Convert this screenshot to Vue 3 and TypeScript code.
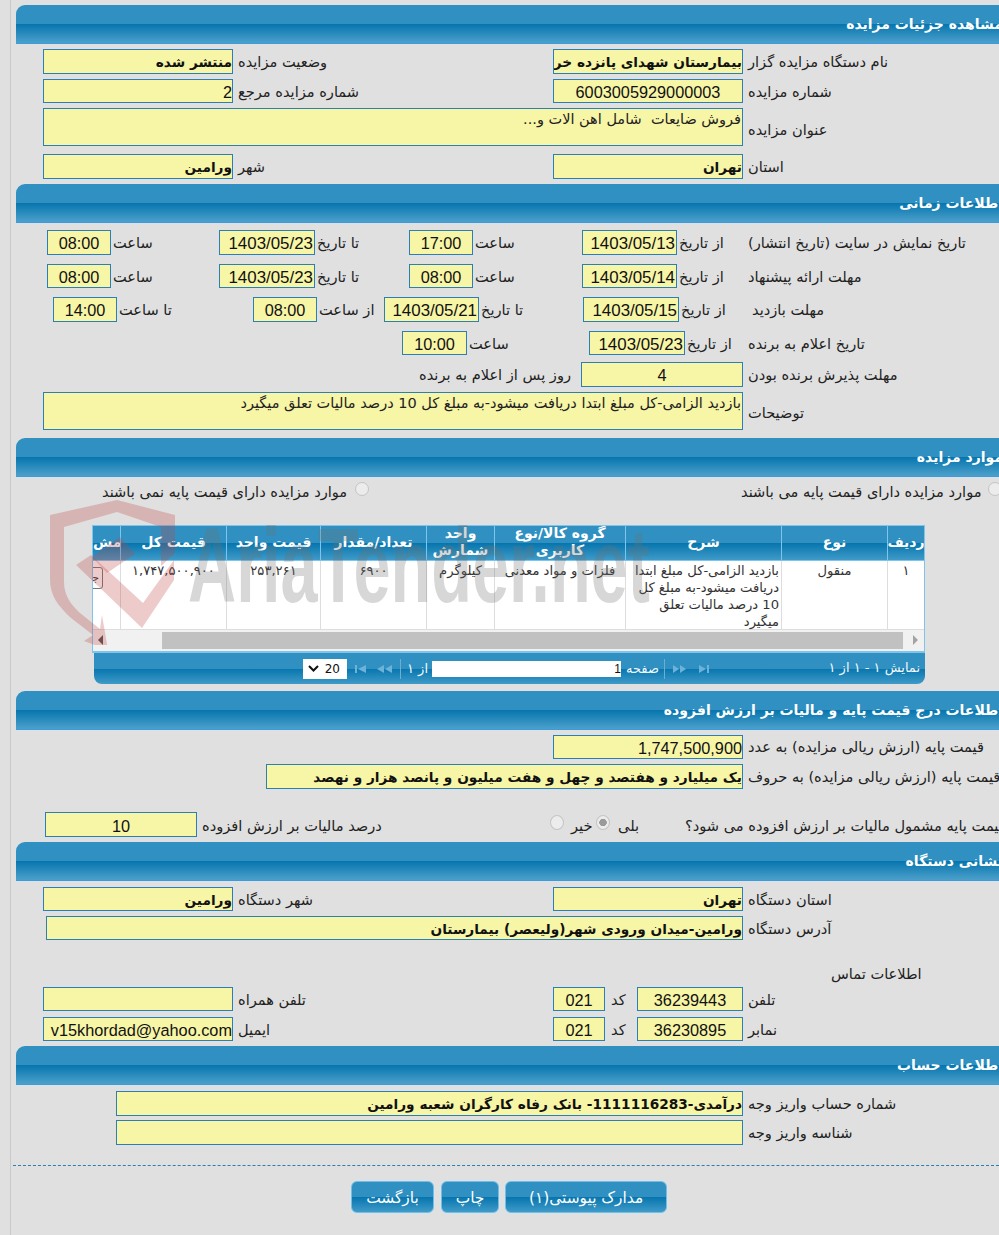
<script setup lang="ts">
interface Col { title: string; value: string; cls: string }
const cols: Col[] = [
  { title: 'مش', value: '', cls: 'c-more' },
  { title: 'قیمت کل', value: '۱,۷۴۷,۵۰۰,۹۰۰', cls: 'c-total' },
  { title: 'قیمت واحد', value: '۲۵۳,۲۶۱', cls: 'c-unit' },
  { title: 'تعداد/مقدار', value: '۶۹۰۰', cls: 'c-qty' },
  { title: 'واحد شمارش', value: 'کیلوگرم', cls: 'c-count' },
  { title: 'گروه کالا/نوع کاربری', value: 'فلزات و مواد معدنی', cls: 'c-group' },
  { title: 'شرح', value: 'بازدید الزامی-کل مبلغ ابتدا دریافت میشود-به مبلغ کل 10 درصد مالیات تعلق میگیرد', cls: 'c-desc' },
  { title: 'نوع', value: 'منقول', cls: 'c-type' },
  { title: 'ردیف', value: '۱', cls: 'c-idx' },
]
</script>

<template>
  <div class="page">
    <section class="panel">
      <h2 class="bar">مشاهده جزئیات مزایده</h2>
      <div class="row top5">
        <div class="cell w510"><span class="fld w190 b rtl">منتشر شده</span><span class="lab">وضعیت مزایده</span></div>
        <div class="cell"><span class="fld w190 b rtl">بیمارستان شهدای پانزده خرداد</span><span class="lab">نام دستگاه مزایده گزار</span></div>
      </div>
      <div class="row top5">
        <div class="cell w510"><span class="fld w190 h24 num">2</span><span class="lab">شماره مزایده مرجع</span></div>
        <div class="cell"><span class="fld w190 h24 num ctr">6003005929000003</span><span class="lab">شماره مزایده</span></div>
      </div>
      <div class="row top5">
        <div class="cell"><span class="area w700">فروش ضایعات&nbsp; شامل اهن الات و...</span><span class="lab dn3">عنوان مزایده</span></div>
      </div>
      <div class="row top8">
        <div class="cell w510"><span class="fld w190 b rtl">ورامین</span><span class="lab">شهر</span></div>
        <div class="cell"><span class="fld w190 b rtl">تهران</span><span class="lab">استان</span></div>
      </div>
    </section>

    <section class="panel top5">
      <h2 class="bar">اطلاعات زمانی</h2>
      <div class="row top7 pl4">
        <div class="cell w172 g2"><span class="fld w64 num ctr">08:00</span><span class="lab">ساعت</span></div>
        <div class="cell w190 g2"><span class="fld w96 num date">1403/05/23</span><span class="lab">تا تاریخ</span></div>
        <div class="cell w173 g2"><span class="fld w64 num ctr">17:00</span><span class="lab">ساعت</span></div>
        <div class="cell w166 g2"><span class="fld w95 num date">1403/05/13</span><span class="lab">از تاریخ</span></div>
        <span class="lab">تاریخ نمایش در سایت (تاریخ انتشار)</span>
      </div>
      <div class="row top9 pl4">
        <div class="cell w172 g2"><span class="fld w64 h24 num ctr">08:00</span><span class="lab">ساعت</span></div>
        <div class="cell w190 g2"><span class="fld w96 h24 num date">1403/05/23</span><span class="lab">تا تاریخ</span></div>
        <div class="cell w173 g2"><span class="fld w64 h24 num ctr">08:00</span><span class="lab">ساعت</span></div>
        <div class="cell w166 g2"><span class="fld w95 h24 num date">1403/05/14</span><span class="lab">از تاریخ</span></div>
        <span class="lab">مهلت ارائه پیشنهاد</span>
      </div>
      <div class="row top9 pl10">
        <div class="cell w200 g2"><span class="fld w64 num ctr">14:00</span><span class="lab">تا ساعت</span></div>
        <div class="cell w131 g2"><span class="fld w64 num ctr">08:00</span><span class="lab">از ساعت</span></div>
        <div class="cell w199 g2"><span class="fld w95 num date">1403/05/21</span><span class="lab">تا تاریخ</span></div>
        <div class="cell w169 g2"><span class="fld w96 num date">1403/05/15</span><span class="lab">از تاریخ</span></div>
        <span class="lab">مهلت بازدید</span>
      </div>
      <div class="row top9 pl359">
        <div class="cell w187 g2"><span class="fld w65 h24 num ctr">10:00</span><span class="lab">ساعت</span></div>
        <div class="cell w159 g2"><span class="fld w96 h24 num date">1403/05/23</span><span class="lab">از تاریخ</span></div>
        <span class="lab">تاریخ اعلام به برنده</span>
      </div>
      <div class="row top7 pl380">
        <span class="lab w158 end">روز پس از اعلام به برنده</span>
        <span class="fld w162 num ctr ml10">4</span>
        <span class="lab ml5">مهلت پذیرش برنده بودن</span>
      </div>
      <div class="row top5">
        <div class="cell"><span class="area w700">بازدید الزامی-کل مبلغ ابتدا دریافت میشود-به مبلغ کل 10 درصد مالیات تعلق میگیرد</span><span class="lab dn2">توضیحات</span></div>
      </div>
    </section>

    <section class="panel top8">
      <h2 class="bar">موارد مزایده</h2>
      <div class="radios">
        <div class="radio-item left"><span class="lab w249">موارد مزایده دارای قیمت پایه نمی باشند</span><i class="radio"></i></div>
        <div class="radio-item right"><span class="lab w244">موارد مزایده دارای قیمت پایه می باشند</span><i class="radio"></i></div>
      </div>
      <div class="grid">
        <div class="thead">
          <div v-for="c in cols" :key="c.cls" class="th" :class="c.cls">{{ c.title }}</div>
        </div>
        <div class="tbody">
          <div v-for="c in cols" :key="c.cls" class="td" :class="c.cls">
            <span v-if="c.cls === 'c-more'" class="more">جزئیات</span>
            <template v-else>{{ c.value }}</template>
          </div>
        </div>
        <div class="hscroll">
          <span class="arrow a-left"></span>
          <span class="thumb"></span>
          <span class="arrow a-right"></span>
        </div>
      </div>
      <div class="pager">
        <span class="select"><svg width="11" height="7" viewBox="0 0 11 7"><path d="M1 1l4.500 4.500L10 1" fill="none" stroke="#111" stroke-width="2"/></svg><b>20</b></span>
        <svg class="nav" width="37" height="8" viewBox="0 0 37 8"><path d="M0 0h2v8H0zM11 0v8L3 4zM29 0v8l-7-4zM37 0v8l-7-4z" fill="#6db2d8"/></svg>
        <span class="sep"></span>
        <span class="ptext of">از ۱</span>
        <span class="pinput">1</span>
        <span class="ptext pg">صفحه</span>
        <span class="sep sep2"></span>
        <svg class="nav" width="38" height="8" viewBox="0 0 38 8"><path d="M0 0v8l6-4zM7 0v8l6-4zM26 0v8l7-4zM34 0h2v8h-2z" fill="#6db2d8"/></svg>
        <span class="ptext show">نمایش ۱ - ۱ از ۱</span>
      </div>
    </section>

    <section class="panel top7">
      <h2 class="bar">اطلاعات درج قیمت پایه و مالیات بر ارزش افزوده</h2>
      <div class="row top5 pl510">
        <span class="fld w190 h24 num">1,747,500,900</span><span class="lab ml5">قیمت پایه (ارزش ریالی مزایده) به عدد</span>
      </div>
      <div class="row top5 pl223">
        <span class="fld w477 b rtl">یک میلیارد و هفتصد و چهل و هفت میلیون و پانصد هزار و نهصد</span><span class="lab ml5">قیمت پایه (ارزش ریالی مزایده) به حروف</span>
      </div>
      <div class="row top23 pl2">
        <span class="fld w152 num ctr tall">10</span><span class="lab ml5 w348">درصد مالیات بر ارزش افزوده</span>
        <i class="radio r2"></i><span class="lab ml7 w25">خیر</span><i class="radio r2 on"></i><span class="lab ml8 w67">بلی</span>
        <span class="lab">قیمت پایه مشمول مالیات بر ارزش افزوده می شود؟</span>
      </div>
    </section>

    <section class="panel top5">
      <h2 class="bar">نشانی دستگاه</h2>
      <div class="row top6">
        <div class="cell w510"><span class="fld w190 h24 b rtl">ورامین</span><span class="lab">شهر دستگاه</span></div>
        <div class="cell"><span class="fld w190 h24 b rtl">تهران</span><span class="lab">استان دستگاه</span></div>
      </div>
      <div class="row top5 pl3">
        <span class="fld w697 h24 b rtl">ورامین-میدان ورودی شهر(ولیعصر) بیمارستان</span><span class="lab ml5">آدرس دستگاه</span>
      </div>
      <div class="contact">اطلاعات تماس</div>
      <div class="row top1">
        <div class="cell w510"><span class="fld w190 h24"></span><span class="lab">تلفن همراه</span></div>
        <div class="cell g6"><span class="fld w52 h24 num ctr">021</span><span class="lab w20">کد</span><span class="fld w106 h24 num ctr">36239443</span><span class="lab ml-1">تلفن</span></div>
      </div>
      <div class="row top6">
        <div class="cell w510"><span class="fld w190 h24 num">v15khordad@yahoo.com</span><span class="lab">ایمیل</span></div>
        <div class="cell g6"><span class="fld w52 h24 num ctr">021</span><span class="lab w20">کد</span><span class="fld w106 h24 num ctr">36230895</span><span class="lab ml-1">نمابر</span></div>
      </div>
    </section>

    <section class="panel top5">
      <h2 class="bar">اطلاعات حساب</h2>
      <div class="row top6 pl73">
        <span class="fld w627 b rtl">درآمدی-1111116283- بانک رفاه کارگران شعبه ورامین</span><span class="lab ml5">شماره حساب واریز وجه</span>
      </div>
      <div class="row top4 pl73">
        <span class="fld w627"></span><span class="lab ml5">شناسه واریز وجه</span>
      </div>
    </section>

    <div class="dash"></div>
    <div class="actions">
      <button class="btn wb1">بازگشت</button>
      <button class="btn wb2">چاپ</button>
      <button class="btn wb3">مدارک پیوستی(۱)</button>
    </div>

    <div class="mark" aria-hidden="true">
      <span class="wm-text">AriaTender.net</span>
      <svg class="shield" width="130" height="145" viewBox="0 0 130 145">
        <path d="M0 15L67 0l58 15v38l-14 13V27L67 12 14 27v55c0 12 6 22 16 31l20 16 2-14 6 35-24-9 9-6-22-17C8 106 0 95 0 80z" fill="#be4646" fill-opacity=".28"/>
        <path d="M26 65l15-10 52 48 31-43v20l-32 48z" fill="#be4646" fill-opacity=".28"/>
        <path d="M42 57l28-20 15 17-28 19z" fill="#be4646" fill-opacity=".28"/>
      </svg>
    </div>
  </div>
</template>

<style>
html, body { margin: 0; background: #e0e0e0; overflow: hidden; }
</style>

<style scoped>
.page {
  position: relative;
  width: 999px;
  height: 1235px;
  overflow: hidden;
  box-sizing: border-box;
  padding: 5px 0 0 16px;
  background: #e0e0e0;
  color: #111;
  font-family: "Liberation Sans", "DejaVu Sans", sans-serif;
  font-size: 14px;
}
.page::before {
  content: "";
  position: absolute;
  left: 10px;
  top: 0;
  bottom: 0;
  width: 1px;
  background: #c9c9c9;
}
.panel { width: 1000px; }
.bar {
  box-sizing: border-box;
  height: 39px;
  margin: 0;
  padding: 8px 13px 0 0;
  border-radius: 9px 0 0 0;
  border-bottom: 1px solid #3b9be0;
  background: linear-gradient(#2f90c1 0, #2f90c1 50%, #0776ae 51%, #4ca0cb 100%);
  color: #fff;
  font: bold 14px/22px "DejaVu Sans", sans-serif;
  direction: rtl;
  text-align: right;
  white-space: nowrap;
}
.row { display: flex; align-items: center; padding-left: 27px; min-height: 24px; }
.cell { display: flex; align-items: center; gap: 5px; flex: none; }
.lab {
  flex: none;
  position: relative;
  font-family: "DejaVu Sans", sans-serif;
  font-size: 14.600px;
  line-height: 18px;
  direction: rtl;
  text-align: left;
  white-space: nowrap;
  color: #222;
}
.row:has(.h24):not(.pl510) .lab, .pl2 .lab { top: 1px; }
.fld {
  flex: none;
  display: block;
  box-sizing: border-box;
  height: 25px;
  border: 1px solid #2b7fb3;
  background: #f7f5a6;
  padding: 0;
  overflow: hidden;
  white-space: nowrap;
  text-align: right;
  font-family: "Liberation Sans", "DejaVu Sans", sans-serif;
  font-size: 16.300px;
  line-height: 24px;
  color: #111;
}
.area {
  display: block;
  box-sizing: border-box;
  height: 38px;
  border: 1px solid #2b7fb3;
  background: #f7f5a6;
  padding: 1px 1px 0;
  direction: rtl;
  font-family: "DejaVu Sans", "Liberation Sans", sans-serif;
  font-size: 14.500px;
  line-height: 19px;
  color: #222;
}
.b { font-weight: bold; font-family: "DejaVu Sans", sans-serif; font-size: 13.700px; line-height: 25px; }
.rtl { direction: rtl; }
.num { font-weight: normal; }
.ctr { text-align: center; }
.h24 { height: 24px; line-height: 24px; }
.date { text-align: right; padding-right: 1px; font-size: 16.900px; line-height: 25px; }
.tall { line-height: 26px; }
.end { text-align: right; }
.dn3 { top: 3px; }
.dn2 { top: 2px; }

.top1 { margin-top: 1px; } .top4 { margin-top: 4px; } .top5 { margin-top: 5px; }
.top6 { margin-top: 6px; } .top7 { margin-top: 7px; } .top8 { margin-top: 8px; }
.top9 { margin-top: 9px; } .top23 { margin-top: 23px; }
.pl2 { padding-left: 29px; } .pl3 { padding-left: 30px; } .pl4 { padding-left: 31px; }
.pl10 { padding-left: 37px; } .pl73 { padding-left: 100px; } .pl223 { padding-left: 250px; }
.pl359 { padding-left: 386px; } .pl380 { padding-left: 407px; } .pl510 { padding-left: 537px; }
.ml5 { margin-left: 5px; } .ml7 { margin-left: 7px; } .ml8 { margin-left: 8px; } .ml10 { margin-left: 10px; }
.ml-1 { margin-left: -1px; }
.g2 { gap: 2px; } .g6 { gap: 6px; }

.w20 { width: 20px; } .w25 { width: 25px; } .w52 { width: 52px; } .w64 { width: 64px; } .w65 { width: 65px; }
.w67 { width: 67px; } .w95 { width: 95px; } .w96 { width: 96px; } .w106 { width: 106px; } .w131 { width: 131px; }
.w152 { width: 152px; } .w158 { width: 148px; } .w159 { width: 159px; } .w162 { width: 162px; } .w166 { width: 166px; }
.w169 { width: 169px; } .w172 { width: 172px; } .w173 { width: 173px; } .w187 { width: 187px; } .w190 { width: 190px; }
.w199 { width: 199px; } .w200 { width: 200px; } .w244 { width: 244px; } .w249 { width: 249px; } .w348 { width: 348px; }
.w477 { width: 477px; } .w510 { width: 510px; }
.w627 { width: 627px; } .w697 { width: 697px; } .w700 { width: 700px; }

.radios { position: relative; height: 48px; }
.radio-item { position: absolute; top: 6px; display: flex; align-items: flex-start; }
.radio-item.left { left: 86px; gap: 4px; }
.radio-item.right { left: 725px; gap: 3px; }
.radio {
  flex: none;
  display: block;
  box-sizing: border-box;
  width: 14px;
  height: 14px;
  margin-top: -1px;
  border: 1px solid #c4c4c4;
  border-radius: 50%;
  background: #ececec;
}
.radio.r2 { height: 15px; margin-top: -4px; }
.radio.on { background: radial-gradient(circle, #9a9a9a 0 3.500px, #ececec 4px); }

.grid {
  box-sizing: border-box;
  width: 833px;
  margin-left: 76px;
  border: 1px solid #7fc4ea;
  border-bottom-width: 2px;
  background: #fff;
  overflow: hidden;
}
.thead, .tbody { display: flex; }
.th {
  box-sizing: border-box;
  height: 35px;
  display: flex;
  align-items: center;
  justify-content: center;
  padding: 0 4px 2px;
  border-left: 1px solid #7fc4ea;
  border-bottom: 1px solid #7fc4ea;
  background: linear-gradient(#2f90c1 0, #2f90c1 50%, #0776ae 51%, #3f9ac8 100%);
  color: #fff;
  font: bold 14px/17px "DejaVu Sans", sans-serif;
  direction: rtl;
  text-align: center;
}
.td {
  box-sizing: border-box;
  height: 69px;
  padding: 1px 2px 0;
  border-left: 1px solid #ddd;
  border-bottom: 1px solid #ddd;
  direction: rtl;
  text-align: center;
  font: 13.100px/17px "DejaVu Sans", sans-serif;
  color: #333;
}
.c-more { width: 27px; border-left: 0; overflow: hidden; }
.c-total { width: 106px; } .c-unit { width: 94px; } .c-qty { width: 106px; } .c-count { width: 68px; }
.td.c-total, .td.c-unit, .td.c-qty { letter-spacing: 1px; }
.c-group { width: 131px; } .c-desc { width: 156px; text-align: right; } .c-type { width: 106px; } .c-idx { width: 37px; }
.th.c-more { justify-content: flex-end; white-space: nowrap; padding: 0 12px 2px 0; }
.td.c-more { position: relative; }
.more {
  position: absolute;
  right: 17px;
  top: 6px;
  box-sizing: border-box;
  height: 22px;
  padding: 0 3px;
  border: 1px solid #777;
  border-radius: 3px;
  background: #fff;
  white-space: nowrap;
  font-size: 11px;
  line-height: 20px;
}
.hscroll { position: relative; height: 21px; background: #f1f1f1; }
.thumb { position: absolute; left: 69px; right: 21px; top: 2px; height: 17px; background: #c1c1c1; }
.arrow { position: absolute; top: 5px; width: 0; height: 0; border-style: solid; border-color: transparent; border-width: 5px; }
.a-left { left: 5px; border-left-width: 0; border-right-color: #505050; }
.a-right { right: 6px; border-right-width: 0; border-left-color: #a3a3a3; }

.pager {
  position: relative;
  display: flex;
  align-items: center;
  box-sizing: border-box;
  width: 831px;
  height: 31px;
  margin-left: 78px;
  padding-left: 209px;
  border-radius: 0 0 8px 8px;
  background: linear-gradient(#2f90c1 0, #2f90c1 50%, #0776ae 51%, #3f9ac8 100%);
  color: #fff;
}
.select {
  display: flex;
  align-items: center;
  justify-content: space-between;
  box-sizing: border-box;
  width: 44px;
  height: 20px;
  padding: 0 7px 0 5px;
  background: #fff;
}
.select b { font: 12px "DejaVu Sans", sans-serif; color: #111; }
.nav { flex: none; margin-left: 8px; }
.sep { width: 1px; height: 20px; margin-left: 8px; background: #6aaed2; }
.sep2 { margin-left: 5px; }
.ptext { font: 13px/18px "DejaVu Sans", sans-serif; direction: rtl; white-space: nowrap; color: #f2f8fb; }
.of { margin-left: 6px; width: 21px; }
.pinput {
  box-sizing: border-box;
  width: 189px;
  height: 16px;
  margin-left: 4px;
  background: #fff;
  color: #111;
  text-align: right;
  font: 12px/16px "Liberation Sans", sans-serif;
}
.pg { margin-left: 5px; }
.show { position: absolute; right: 5px; top: 6px; }

.contact {
  margin: 23px 0 0 815px;
  height: 23px;
  font: 14.600px/22px "DejaVu Sans", sans-serif;
  direction: rtl;
  text-align: left;
  color: #222;
  white-space: nowrap;
}
.dash { margin: 20px 0 0 -3px; height: 0; border-top: 1px dashed #2b7fb3; }
.actions { display: flex; gap: 7px; margin: 15px 0 0 335px; }
.btn {
  box-sizing: border-box;
  height: 32px;
  padding: 1px 0 0;
  border: 1px solid #6cc1ea;
  border-radius: 6px;
  background: linear-gradient(#2f90c1 0, #2f90c1 50%, #0776ae 51%, #3f9ac8 100%);
  color: #fff;
  font: 15.400px "DejaVu Sans", sans-serif;
  direction: rtl;
}
.wb1 { width: 83px; } .wb2 { width: 58px; } .wb3 { width: 162px; margin-left: -1px; }

.mark { position: absolute; left: 0; top: 0; right: 0; bottom: 0; pointer-events: none; }
.shield { position: absolute; left: 50px; top: 500px; }
.wm-text {
  position: absolute;
  left: 188px;
  top: 516px;
  font: bold 105px/100px "Liberation Sans", sans-serif;
  color: rgba(110, 110, 110, .28);
  white-space: nowrap;
  transform-origin: 0 0;
  transform: scaleX(.635);
}
</style>
